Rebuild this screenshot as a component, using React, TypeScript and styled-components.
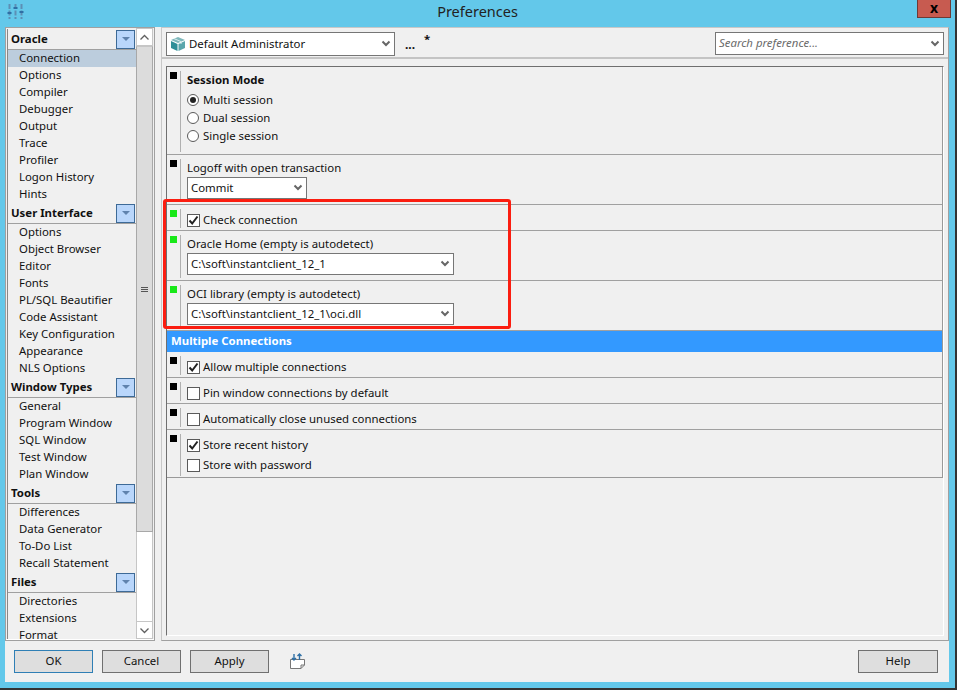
import React from 'react';
import styled, { createGlobalStyle } from 'styled-components';

const Global = createGlobalStyle`
  html, body { margin: 0; padding: 0; background: #63c8ea; }
  * { box-sizing: border-box; }
  body { font-family: "Noto Sans", "Open Sans", sans-serif; font-size: 11.4px; color: #111; }
`;

const Win = styled.div`
  position: relative;
  width: 957px;
  height: 690px;
  overflow: hidden;
  background: #63c8ea;
  border-right: 2px solid #333;
  border-bottom: 2px solid #333;
  display: flex;
  flex-direction: column;
`;

const TitleBar = styled.div`
  height: 27px;
  flex: none;
  display: grid;
  grid-template-columns: 1fr auto 1fr;
  align-items: start;
  padding: 0 4px;
`;

const TitleIcon = styled.svg`
  margin: 3px 0 0 3px;
  width: 17px;
  height: 17px;
`;

const Title = styled.div`
  font-size: 14.5px;
  line-height: 23px;
  color: #222;
`;

const Close = styled.div`
  justify-self: end;
  width: 34px;
  height: 18px;
  background: #c75b50;
  border: 1px solid #6d3a36;
  border-top: 0;
  color: #000;
  font-weight: 700;
  font-size: 14px;
  line-height: 15px;
  text-align: center;
`;

const Client = styled.div`
  flex: 1;
  margin: 0 6px 6px 5px;
  background: #f0f0f0;
  display: flex;
  flex-direction: column;
`;

const Panes = styled.div`
  height: 614px;
  flex: none;
  display: flex;
  gap: 6px;
`;

const NavPane = styled.div`
  width: 150px;
  height: 614px;
  border: 1px solid #a0a0a0;
  padding: 0 1px;
  background: #f0f0f0;
  box-shadow: inset 0 -1px 0 #fff;
  display: flex;
`;

const NavList = styled.div`
  width: 129px;
  height: 610px;
  overflow: hidden;
  margin-top: 1px;
  border-left: 1px solid #888;
`;

const GroupHead = styled.div`
  height: 21px;
  display: flex;
  align-items: center;
  justify-content: space-between;
  padding: 0 1px 0 3px;
  font-weight: 700;
  background: #f0f0f0;
  border-bottom: 1px solid #a0a0a0;
  color: #111;
`;

const GroupName = styled.span`
  margin-bottom: 2px;
`;

const GroupToggle = styled.div`
  width: 19px;
  height: 19px;
  background: #b9d6fb;
  border: 1px solid #3d6a97;
  display: flex;
  align-items: center;
  justify-content: center;
  &::after {
    content: '';
    border-left: 4px solid transparent;
    border-right: 4px solid transparent;
    border-top: 4px solid #5f82ad;
  }
`;

const NavItem = styled.div<{ $active?: boolean }>`
  height: 17px;
  line-height: 15px;
  padding-left: 11px;
  background: ${p => (p.$active ? '#bccddd' : '#f0f0f0')};
  white-space: nowrap;
`;

const ScrollBar = styled.div`
  width: 17px;
  height: 611px;
  background: #fff;
  display: flex;
  flex-direction: column;
`;

const ScrollBtn = styled.div`
  height: 18px;
  flex: none;
  background: #fff;
  border: 1px solid #c6c6c6;
  display: flex;
  align-items: center;
  justify-content: center;
`;

const ScrollThumb = styled.div`
  height: 486px;
  flex: none;
  background: #dcdcdc;
  border: 1px solid #a8a8a8;
  border-top-color: #c6c6c6;
  display: flex;
  align-items: center;
  justify-content: center;
`;

const Grip = styled.div`
  width: 7px;
  height: 5px;
  border-top: 1px solid #555;
  border-bottom: 1px solid #555;
  &::after {
    content: '';
    display: block;
    height: 1px;
    margin-top: 1px;
    background: #555;
  }
`;

const ScrollGap = styled.div`
  flex: 1;
  border-left: 1px solid #c6c6c6;
  border-right: 1px solid #c6c6c6;
`;

const MainPane = styled.div`
  width: 788px;
  height: 614px;
  border-left: 1px solid #c8c8c8;
  border-right: 1px solid #a0a0a0;
  border-top: 1px solid #c8c8c8;
  border-bottom: 1px solid #a0a0a0;
  display: flex;
  flex-direction: column;
`;

const Toolbar = styled.div`
  height: 31px;
  flex: none;
  display: flex;
  align-items: flex-start;
  padding: 4px 4px 0 4px;
  border-bottom: 2px solid #c4c4c4;
`;

const Select = styled.div<{ $w: number; $h?: number; $italic?: boolean }>`
  width: ${p => p.$w}px;
  height: ${p => p.$h ?? 24}px;
  background: #fff;
  border: 1px solid #767676;
  display: flex;
  align-items: center;
  padding: 0 3px 0 3px;
  gap: 3px;
  white-space: nowrap;
  color: ${p => (p.$italic ? '#6a6a6a' : '#111')};
  font-style: ${p => (p.$italic ? 'italic' : 'normal')};
  flex: none;
`;

const SelectText = styled.span`
  flex: 1;
  margin-bottom: 2px;
`;

const Dots = styled.span`
  font-weight: 700;
  margin-left: 10px;
  width: 19px;
  line-height: 26px;
  font-size: 12px;
`;

const Star = styled.span`
  flex: 1;
  line-height: 10px;
  margin-top: 2px;
  font-weight: 700;
`;

const Frame = styled.div`
  margin: 7px 4px 0 4px;
  height: 570px;
  flex: none;
  background: #f0f0f0;
  border-top: 1px solid #6f6f6f;
  border-left: 1px solid #6f6f6f;
  border-right: 1px solid #fff;
  border-bottom: 1px solid #fff;
`;

const Sheet = styled.div`
  height: 411px;
  border-right: 1px solid #999;
  border-bottom: 1px solid #999;
`;

const Row = styled.div<{ $h: number }>`
  height: ${p => p.$h}px;
  border-bottom: 1px solid #a0a0a0;
  display: flex;
  &:last-child { border-bottom: 0; }
`;

const Gutter = styled.div`
  width: 14px;
  flex: none;
  margin-top: 4px;
  margin-bottom: 2px;
  border-right: 1px solid #b0b0b0;
  padding: 1px 0 0 3px;
`;

const Marker = styled.div<{ $on?: boolean }>`
  width: 7px;
  height: 7px;
  background: ${p => (p.$on ? '#18e818' : '#000')};
`;

const RowBody = styled.div`
  flex: 1;
  padding-left: 6px;
  display: flex;
  flex-direction: column;
`;

const Heading = styled.div`
  font-weight: 700;
  line-height: 16px;
  margin-top: 5px;
  margin-bottom: 3px;
`;

const Label = styled.div`
  line-height: 16px;
  margin-top: 5px;
  margin-bottom: 1px;
`;

const Option = styled.div<{ $gap?: number; $space?: number }>`
  display: flex;
  align-items: center;
  gap: ${p => p.$space ?? 4}px;
  height: 18px;
  margin-top: ${p => p.$gap ?? 0}px;
`;

const OptionText = styled.span`
  margin-bottom: 2px;
`;

const Radio = styled.span<{ $on?: boolean }>`
  width: 12px;
  height: 12px;
  border-radius: 50%;
  border: 1px solid #5a5a5a;
  background: #fff;
  display: flex;
  align-items: center;
  justify-content: center;
  &::after {
    content: '';
    width: 6px;
    height: 6px;
    border-radius: 50%;
    background: ${p => (p.$on ? '#222' : 'transparent')};
  }
`;

const Check = styled.span`
  width: 13px;
  height: 13px;
  flex: none;
  border: 1px solid #5a5a5a;
  background: #fff;
  display: flex;
  align-items: center;
  justify-content: center;
`;

const Banner = styled.div`
  height: 21px;
  background: #3399ff;
  color: #fff;
  font-weight: 700;
  line-height: 19px;
  padding-left: 4px;
`;

const Callout = styled.div`
  position: absolute;
  left: 163px;
  top: 199px;
  width: 348px;
  height: 130px;
  border: 3px solid #fb1d10;
  border-radius: 3px;
  pointer-events: none;
`;

const Footer = styled.div`
  flex: 1;
  display: flex;
  align-items: flex-start;
  padding: 9px 11px 0 9px;
  gap: 9px;
`;

const Btn = styled.div<{ $default?: boolean; $w?: number }>`
  width: ${p => p.$w ?? 79}px;
  height: 23px;
  background: #dedede;
  border: 1px solid ${p => (p.$default ? '#2f7fb5' : '#707070')};
  text-align: center;
  line-height: 19px;
  color: #111;
`;

const PasteIcon = styled.svg`
  width: 17px;
  height: 17px;
  margin: 3px 0 0 11px;
`;

const Spacer = styled.div`
  flex: 1;
`;

const Chevron = () => (
  <svg width="10" height="8" viewBox="0 0 10 8">
    <path d="M1.5 1.5 L5 5 L8.5 1.5" fill="none" stroke="#666" strokeWidth="2" />
  </svg>
);

const Tick = () => (
  <svg width="11" height="11" viewBox="0 0 11 11">
    <path d="M1.5 5.5 L4.2 8.5 L9.5 1.5" fill="none" stroke="#222" strokeWidth="2" />
  </svg>
);

const Box3D = () => (
  <svg width="16" height="16" viewBox="0 0 16 16">
    <path d="M8 1 L15 4 L8 7 L1 4 Z" fill="#7fb8bc" />
    <path d="M1 5 L7.5 8 V15 L1 12 Z" fill="#2f8f98" />
    <path d="M15 5 L8.5 8 V15 L15 12 Z" fill="#5aa6ac" />
    <path d="M4 2.6 L11 5.6 V8" fill="none" stroke="#d9ecee" strokeWidth="1" />
  </svg>
);

const groups: { name: string; items: string[] }[] = [
  { name: 'Oracle', items: ['Connection', 'Options', 'Compiler', 'Debugger', 'Output', 'Trace', 'Profiler', 'Logon History', 'Hints'] },
  { name: 'User Interface', items: ['Options', 'Object Browser', 'Editor', 'Fonts', 'PL/SQL Beautifier', 'Code Assistant', 'Key Configuration', 'Appearance', 'NLS Options'] },
  { name: 'Window Types', items: ['General', 'Program Window', 'SQL Window', 'Test Window', 'Plan Window'] },
  { name: 'Tools', items: ['Differences', 'Data Generator', 'To-Do List', 'Recall Statement'] },
  { name: 'Files', items: ['Directories', 'Extensions', 'Format'] },
];

const CheckRow: React.FC<{ label: string; on?: boolean }> = ({ label, on }) => (
  <Row $h={26}>
    <Gutter><Marker /></Gutter>
    <RowBody>
      <Option $gap={6} $space={3}><Check>{on && <Tick />}</Check><OptionText>{label}</OptionText></Option>
    </RowBody>
  </Row>
);

export default function App() {
  return (
    <Win>
      <Global />
      <TitleBar>
        <TitleIcon viewBox="0 0 17 17">
          <path d="M2.5 1v15M8.5 1v15M14.5 1v15" stroke="#5d8fb5" strokeWidth="2" strokeDasharray="5 1.5" />
          <path d="M0.5 10h4M6.5 5h4M12.5 9h4" stroke="#2f6fa5" strokeWidth="2" />
        </TitleIcon>
        <Title>Preferences</Title>
        <Close>x</Close>
      </TitleBar>
      <Client>
        <Panes>
          <NavPane>
            <NavList>
              {groups.map(g => (
                <div key={g.name}>
                  <GroupHead><GroupName>{g.name}</GroupName><GroupToggle /></GroupHead>
                  {g.items.map(i => (
                    <NavItem key={i} $active={i === 'Connection'}>{i}</NavItem>
                  ))}
                </div>
              ))}
            </NavList>
            <ScrollBar>
              <ScrollBtn>
                <svg width="11" height="7" viewBox="0 0 11 7"><path d="M1.5 5.5 L5.5 1.5 L9.5 5.5" fill="none" stroke="#606060" strokeWidth="1.3" /></svg>
              </ScrollBtn>
              <ScrollThumb><Grip /></ScrollThumb>
              <ScrollGap />
              <ScrollBtn>
                <svg width="11" height="7" viewBox="0 0 11 7"><path d="M1.5 1.5 L5.5 5.5 L9.5 1.5" fill="none" stroke="#606060" strokeWidth="1.3" /></svg>
              </ScrollBtn>
            </ScrollBar>
          </NavPane>
          <MainPane>
            <Toolbar>
              <Select $w={229}>
                <Box3D />
                <SelectText>Default Administrator</SelectText>
                <Chevron />
              </Select>
              <Dots>...</Dots>
              <Star>*</Star>
              <Select $w={229} $h={23} $italic>
                <SelectText>Search preference...</SelectText>
                <Chevron />
              </Select>
            </Toolbar>
            <Frame>
              <Sheet>
                <Row $h={88}>
                  <Gutter><Marker /></Gutter>
                  <RowBody>
                    <Heading>Session Mode</Heading>
                    <Option><Radio $on /><OptionText>Multi session</OptionText></Option>
                    <Option><Radio /><OptionText>Dual session</OptionText></Option>
                    <Option><Radio /><OptionText>Single session</OptionText></Option>
                  </RowBody>
                </Row>
                <Row $h={50}>
                  <Gutter><Marker /></Gutter>
                  <RowBody>
                    <Label>Logoff with open transaction</Label>
                    <Select $w={120} $h={22}><SelectText>Commit</SelectText><Chevron /></Select>
                  </RowBody>
                </Row>
                <Row $h={26}>
                  <Gutter><Marker $on /></Gutter>
                  <RowBody>
                    <Option $gap={6} $space={3}><Check><Tick /></Check><OptionText>Check connection</OptionText></Option>
                  </RowBody>
                </Row>
                <Row $h={50}>
                  <Gutter><Marker $on /></Gutter>
                  <RowBody>
                    <Label>Oracle Home (empty is autodetect)</Label>
                    <Select $w={267} $h={22}><SelectText>C:\soft\instantclient_12_1</SelectText><Chevron /></Select>
                  </RowBody>
                </Row>
                <Row $h={50}>
                  <Gutter><Marker $on /></Gutter>
                  <RowBody>
                    <Label>OCI library (empty is autodetect)</Label>
                    <Select $w={267} $h={22}><SelectText>C:\soft\instantclient_12_1\oci.dll</SelectText><Chevron /></Select>
                  </RowBody>
                </Row>
                <Banner>Multiple Connections</Banner>
                <CheckRow label="Allow multiple connections" on />
                <CheckRow label="Pin window connections by default" />
                <CheckRow label="Automatically close unused connections" />
                <Row $h={48}>
                  <Gutter><Marker /></Gutter>
                  <RowBody>
                    <Option $gap={6} $space={3}><Check><Tick /></Check><OptionText>Store recent history</OptionText></Option>
                    <Option $gap={2} $space={3}><Check /><OptionText>Store with password</OptionText></Option>
                  </RowBody>
                </Row>
              </Sheet>
            </Frame>
          </MainPane>
        </Panes>
        <Footer>
          <Btn $default>OK</Btn>
          <Btn>Cancel</Btn>
          <Btn>Apply</Btn>
          <PasteIcon viewBox="0 0 17 17">
            <path d="M1.5 6.5 H15.5 V12 L12 15.5 H1.5 Z M15.5 12 H12 V15.5" fill="#fff" stroke="#777" />
            <path d="M5 1v6M3 5l2 2 2-2" fill="none" stroke="#2f6fa5" strokeWidth="1.4" />
            <path d="M10.5 7V1M8.5 3l2-2 2 2" fill="none" stroke="#2f6fa5" strokeWidth="1.4" />
          </PasteIcon>
          <Spacer />
          <Btn $w={80}>Help</Btn>
        </Footer>
      </Client>
      <Callout />
    </Win>
  );
}
